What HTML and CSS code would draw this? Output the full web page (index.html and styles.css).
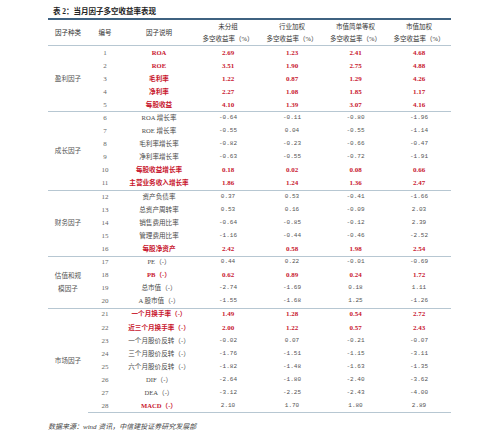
FILE: index.html
```html
<!DOCTYPE html>
<html lang="zh">
<head>
<meta charset="utf-8">
<link rel="stylesheet" href="styles.css">
</head>
<body>
<div class="page">
  <div class="title">表 2：当月因子多空收益率表现</div>
  <table class="factors">
    <colgroup>
      <col class="c-type"><col class="c-no"><col class="c-desc">
      <col class="c-val"><col class="c-val"><col class="c-val6"><col class="c-val">
    </colgroup>
    <thead>
      <tr>
        <th>因子种类</th>
        <th>编号</th>
        <th>因子说明</th>
        <th>未分组<br>多空收益率（%）</th>
        <th>行业加权<br>多空收益率（%）</th>
        <th>市值简单等权<br>多空收益率（%）</th>
        <th>市值加权<br>多空收益率（%）</th>
      </tr>
    </thead>
    <tbody>
      <tr class="first"><td class="grp" rowspan="5">盈利因子</td><td class="no">1</td><td class="desc hi">ROA</td><td class="hv">2.69</td><td class="hv">1.23</td><td class="hv">2.41</td><td class="hv">4.68</td></tr>
      <tr><td class="no">2</td><td class="desc hi">ROE</td><td class="hv">3.51</td><td class="hv">1.90</td><td class="hv">2.75</td><td class="hv">4.88</td></tr>
      <tr><td class="no">3</td><td class="desc hi">毛利率</td><td class="hv">1.22</td><td class="hv">0.87</td><td class="hv">1.29</td><td class="hv">4.26</td></tr>
      <tr><td class="no">4</td><td class="desc hi">净利率</td><td class="hv">2.27</td><td class="hv">1.08</td><td class="hv">1.85</td><td class="hv">1.17</td></tr>
      <tr><td class="no">5</td><td class="desc hi">每股收益</td><td class="hv">4.10</td><td class="hv">1.39</td><td class="hv">3.07</td><td class="hv">4.16</td></tr>

      <tr class="first"><td class="grp" rowspan="6">成长因子</td><td class="no">6</td><td class="desc">ROA 增长率</td><td class="v">-0.64</td><td class="v">-0.11</td><td class="v">-0.80</td><td class="v">-1.96</td></tr>
      <tr><td class="no">7</td><td class="desc">ROE 增长率</td><td class="v">-0.55</td><td class="v">0.04</td><td class="v">-0.55</td><td class="v">-1.14</td></tr>
      <tr><td class="no">8</td><td class="desc">毛利率增长率</td><td class="v">-0.82</td><td class="v">-0.23</td><td class="v">-0.66</td><td class="v">-0.47</td></tr>
      <tr><td class="no">9</td><td class="desc">净利率增长率</td><td class="v">-0.63</td><td class="v">-0.55</td><td class="v">-0.72</td><td class="v">-1.91</td></tr>
      <tr><td class="no">10</td><td class="desc hi">每股收益增长率</td><td class="hv">0.18</td><td class="hv">0.02</td><td class="hv">0.08</td><td class="hv">0.66</td></tr>
      <tr><td class="no">11</td><td class="desc hi">主营业务收入增长率</td><td class="hv">1.86</td><td class="hv">1.24</td><td class="hv">1.36</td><td class="hv">2.47</td></tr>

      <tr class="first"><td class="grp" rowspan="5">财务因子</td><td class="no">12</td><td class="desc">资产负债率</td><td class="v">0.37</td><td class="v">0.53</td><td class="v">-0.41</td><td class="v">-1.66</td></tr>
      <tr><td class="no">13</td><td class="desc">总资产周转率</td><td class="v">0.53</td><td class="v">0.16</td><td class="v">-0.09</td><td class="v">2.03</td></tr>
      <tr><td class="no">14</td><td class="desc">销售费用比率</td><td class="v">-0.64</td><td class="v">-0.85</td><td class="v">-0.12</td><td class="v">2.39</td></tr>
      <tr><td class="no">15</td><td class="desc">管理费用比率</td><td class="v">-1.16</td><td class="v">-0.44</td><td class="v">-0.46</td><td class="v">-2.52</td></tr>
      <tr><td class="no">16</td><td class="desc hi">每股净资产</td><td class="hv">2.42</td><td class="hv">0.58</td><td class="hv">1.98</td><td class="hv">2.54</td></tr>

      <tr class="first"><td class="grp" rowspan="4">估值和规模因子</td><td class="no">17</td><td class="desc">PE（-）</td><td class="v">0.44</td><td class="v">0.22</td><td class="v">-0.01</td><td class="v">-0.69</td></tr>
      <tr><td class="no">18</td><td class="desc hi">PB（-）</td><td class="hv">0.62</td><td class="hv">0.89</td><td class="hv">0.24</td><td class="hv">1.72</td></tr>
      <tr><td class="no">19</td><td class="desc">总市值（-）</td><td class="v">-2.74</td><td class="v">-1.69</td><td class="v">0.18</td><td class="v">1.11</td></tr>
      <tr><td class="no">20</td><td class="desc">A 股市值（-）</td><td class="v">-1.55</td><td class="v">-1.68</td><td class="v">1.25</td><td class="v">-1.26</td></tr>

      <tr class="first"><td class="grp" rowspan="8">市场因子</td><td class="no">21</td><td class="desc hi">一个月换手率（-）</td><td class="hv">1.49</td><td class="hv">1.28</td><td class="hv">0.54</td><td class="hv">2.72</td></tr>
      <tr><td class="no">22</td><td class="desc hi">近三个月换手率（-）</td><td class="hv">2.00</td><td class="hv">1.22</td><td class="hv">0.57</td><td class="hv">2.43</td></tr>
      <tr><td class="no">23</td><td class="desc">一个月股价反转（-）</td><td class="v">-0.02</td><td class="v">0.07</td><td class="v">-0.21</td><td class="v">-0.07</td></tr>
      <tr><td class="no">24</td><td class="desc">三个月股价反转（-）</td><td class="v">-1.76</td><td class="v">-1.51</td><td class="v">-1.15</td><td class="v">-3.11</td></tr>
      <tr><td class="no">25</td><td class="desc">六个月股价反转（-）</td><td class="v">-1.82</td><td class="v">-1.48</td><td class="v">-1.63</td><td class="v">-1.35</td></tr>
      <tr><td class="no">26</td><td class="desc">DIF（-）</td><td class="v">-2.64</td><td class="v">-1.80</td><td class="v">-2.40</td><td class="v">-3.62</td></tr>
      <tr><td class="no">27</td><td class="desc">DEA（-）</td><td class="v">-3.12</td><td class="v">-2.25</td><td class="v">-2.43</td><td class="v">-4.00</td></tr>
      <tr><td class="no">28</td><td class="desc hi">MACD（-）</td><td class="v">2.10</td><td class="v">1.70</td><td class="v">1.80</td><td class="v">2.89</td></tr>
    </tbody>
  </table>
  <div class="note">数据来源：wind 资讯，中信建投证券研究发展部</div>
</div>
</body>
</html>
```

FILE: styles.css
```css
html, body {
  margin: 0;
  padding: 0;
  background: #ffffff;
}

.page {
  padding-left: 48px;
  font-family: "Liberation Serif", "Noto Sans CJK SC", serif;
  color: #444;
}

.title {
  height: 18px;
  box-sizing: border-box;
  padding: 7px 0 0 5px;
  font-size: 7.5px;
  line-height: 10px;
  font-weight: bold;
  color: #222;
}

.factors {
  width: 403px;
  table-layout: fixed;
  border-collapse: separate;
  border-spacing: 0;
  border-top: 2px solid #3f6281;
}

.c-type { width: 40px; }
.c-no { width: 34px; }
.c-desc { width: 74px; }
.c-val { width: 64px; }
.c-val6 { width: 63px; }

.factors th {
  height: 26px;
  padding: 0;
  font-size: 6.5px;
  line-height: 12px;
  font-weight: normal;
  color: #333;
  text-align: center;
  vertical-align: middle;
  box-shadow: inset 0 -1px 0 #b7c7d2;
}

.factors td {
  height: 13.1px;
  padding: 0;
  font-size: 6.6px;
  line-height: 8px;
  text-align: center;
  vertical-align: middle;
  white-space: nowrap;
}

.factors tbody tr:last-child td {
  box-shadow: inset 0 -1px 0 #b7c7d2;
}

.factors tr.first td {
  box-shadow: inset 0 1px 0 #b7c7d2;
}

.factors tbody tr:first-child td {
  box-shadow: none;
}

.factors td.grp {
  padding: 0 6px;
  white-space: normal;
  line-height: 13px;
  color: #555;
  box-shadow: inset 0 1px 0 #b7c7d2, inset 0 -1px 0 #b7c7d2;
}

.factors tbody tr:first-child td.grp {
  box-shadow: none;
}

.factors td.no {
  font-family: "Liberation Serif", serif;
  font-size: 7px;
  color: #666;
}

.factors td.desc {
  color: #4a4a4a;
}

.factors td.hi {
  color: #c8162e;
  font-weight: bold;
}

.factors td.v {
  font-family: "Liberation Mono", monospace;
  font-size: 6px;
  color: #555;
}

.factors td.hv {
  font-family: "Liberation Serif", serif;
  font-size: 7px;
  font-weight: bold;
  color: #c8162e;
}

.note {
  margin-top: 9px;
  font-size: 7px;
  line-height: 10px;
  font-style: italic;
  color: #444;
}
```
